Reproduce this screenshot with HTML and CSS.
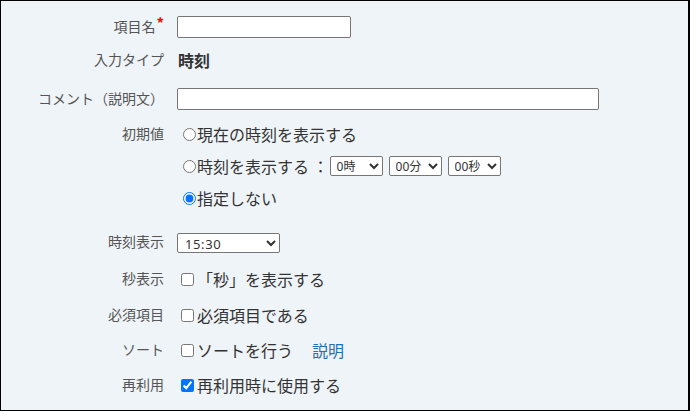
FILE: index.html
```html
<!DOCTYPE html>
<html lang="ja">
<head>
<meta charset="utf-8">
<link rel="stylesheet" href="styles.css">
</head>
<body>
<div class="frame">
  <div class="form">
    <div class="row r1">
      <div class="label">項目名<span class="req">*</span></div>
      <div class="value"><input type="text" class="text short"></div>
    </div>
    <div class="row r2">
      <div class="label">入力タイプ</div>
      <div class="value"><strong class="type">時刻</strong></div>
    </div>
    <div class="row r3">
      <div class="label">コメント（説明文）</div>
      <div class="value"><input type="text" class="text long"></div>
    </div>
    <div class="row r4 top">
      <div class="label">初期値</div>
      <div class="value options">
        <label class="opt"><input type="radio" name="init">現在の時刻を表示する</label>
        <label class="opt"><input type="radio" name="init">時刻を表示する ：<span class="selects">
          <select class="sel"><option>0時</option></select>
          <select class="sel"><option>00分</option></select>
          <select class="sel"><option>00秒</option></select>
        </span></label>
        <label class="opt"><input type="radio" name="init" checked>指定しない</label>
      </div>
    </div>
    <div class="row r5">
      <div class="label">時刻表示</div>
      <div class="value"><select class="fmt"><option>15:30</option></select></div>
    </div>
    <div class="row r6">
      <div class="label">秒表示</div>
      <div class="value"><label class="opt"><input type="checkbox">「秒」を表示する</label></div>
    </div>
    <div class="row r7">
      <div class="label">必須項目</div>
      <div class="value"><label class="opt"><input type="checkbox">必須項目である</label></div>
    </div>
    <div class="row r8">
      <div class="label">ソート</div>
      <div class="value"><label class="opt"><input type="checkbox">ソートを行う</label><a href="#" class="help">説明</a></div>
    </div>
    <div class="row r9">
      <div class="label">再利用</div>
      <div class="value"><label class="opt"><input type="checkbox" checked>再利用時に使用する</label></div>
    </div>
  </div>
</div>
</body>
</html>
```

FILE: styles.css
```css
html, body {
  margin: 0;
  padding: 0;
}
body {
  font-family: "Noto Sans CJK JP", "Noto Sans", sans-serif;
  color: #333;
}
.frame {
  width: 690px;
  height: 411px;
  box-sizing: border-box;
  border: 1px solid #000;
  border-right-width: 2px;
  background: #eff4f8;
  overflow: hidden;
}
.form {
  display: flex;
  flex-direction: column;
  gap: 11px;
  padding-top: 15px;
}
.row {
  display: flex;
  align-items: center;
}
.row.top {
  align-items: flex-start;
}
.label {
  width: 163px;
  margin-right: 13px;
  flex: none;
  text-align: right;
  font-size: 14px;
  line-height: 20px;
  color: #555;
  padding-bottom: 2px;
}
.top .label {
  line-height: 22px;
  padding: 0;
}
.req {
  color: #f00;
  font-size: 15px;
  font-weight: bold;
  position: relative;
  top: -3px;
  margin-left: 1px;
}
.value {
  display: flex;
  align-items: center;
  font-size: 16px;
  line-height: 24px;
  color: #333;
}
.r1 { height: 22px; }
.r2 { height: 22px; }
.r3 { height: 22px; margin-top: 6px; }
.r4 { margin-top: 1px; }
.r5 { margin-top: 12px; height: 20px; }
.r5 .label { padding-bottom: 4px; }
.r6 { margin-top: 3px; }
.r7 { margin-top: 1px; }
.type {
  font-weight: bold;
  font-size: 16px;
  padding-left: 1px;
}
.text {
  box-sizing: border-box;
  height: 22px;
  margin: 0;
  border: 1px solid #767676;
  border-radius: 2px;
  background: #fff;
}
.short { width: 174px; }
.long { width: 422px; }
.options {
  flex-direction: column;
  align-items: flex-start;
  gap: 8px;
}
.opt {
  display: flex;
  align-items: center;
  height: 24px;
}
.opt input[type="radio"] {
  margin: 0 1px 0 6px;
  width: 13px;
  height: 13px;
}
.opt input[type="checkbox"] {
  margin: 0 3px 0 4px;
  width: 13px;
  height: 13px;
}
.selects {
  display: flex;
  gap: 6px;
  margin-left: 1px;
}
.sel, .fmt {
  box-sizing: border-box;
  height: 20px;
  margin: 0;
  border: 1px solid #767676;
  border-radius: 2px;
  background: #fff;
  color: #333;
  font-family: "Noto Sans", "Noto Sans CJK JP", sans-serif;
  font-size: 12px;
  padding: 0 0 0 2px;
}
.sel { width: 53px; }
.fmt {
  width: 103px;
  font-size: 13px;
  letter-spacing: 0.6px;
  padding-left: 3px;
}
.help {
  margin-left: 19px;
  color: #1f6fb5;
  text-decoration: none;
}
```
